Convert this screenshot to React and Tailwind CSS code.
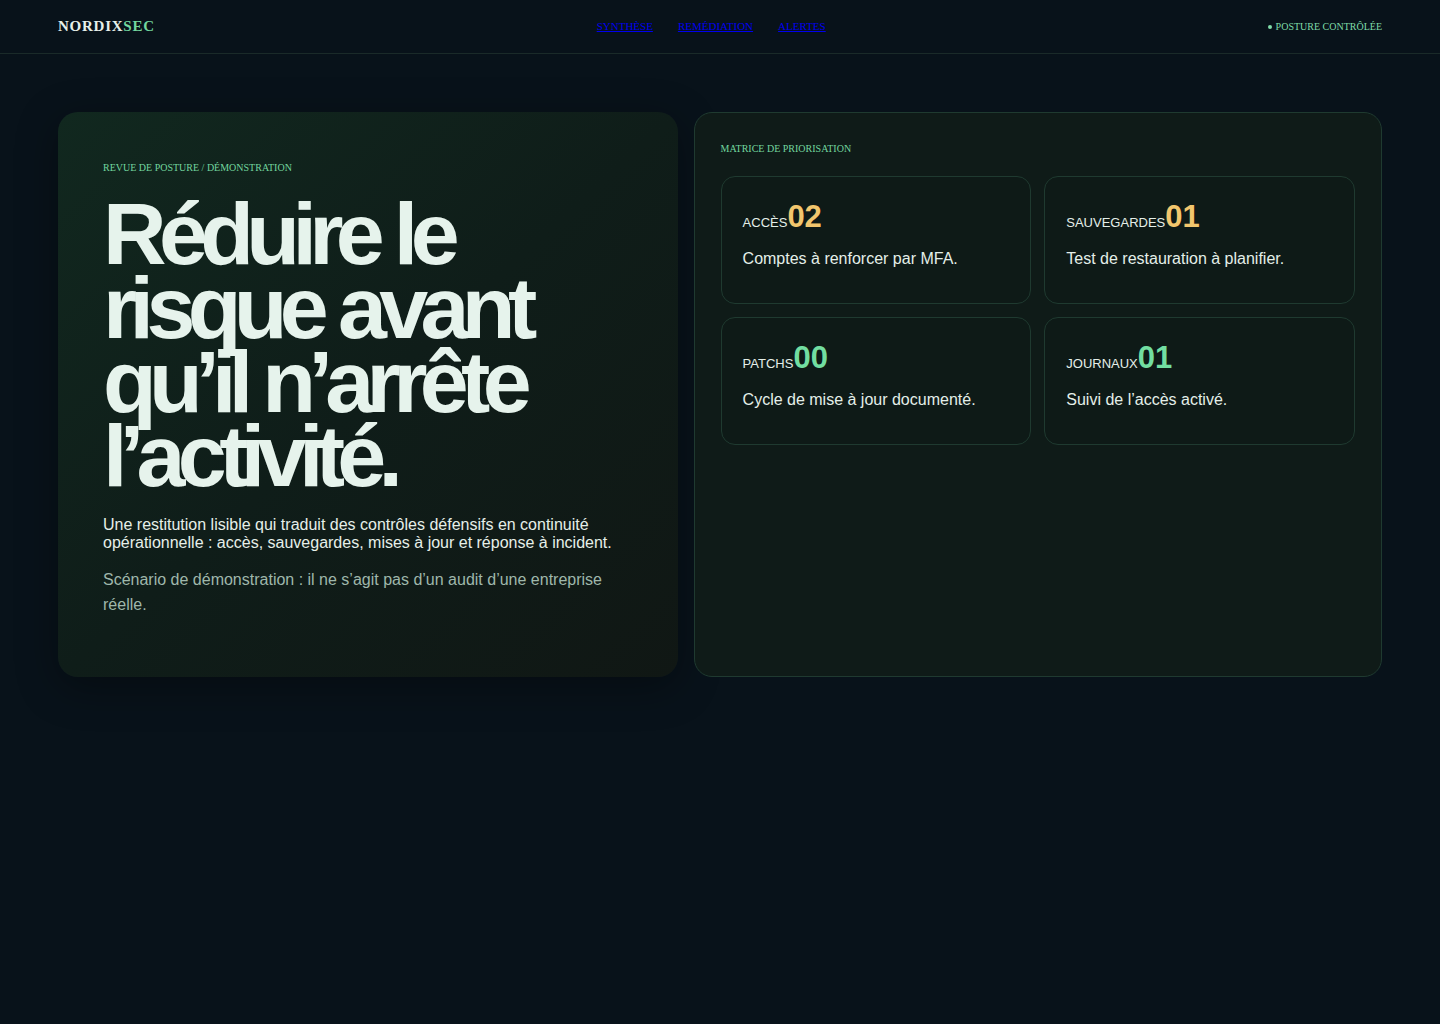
import React from 'react';

const serif = { fontFamily: '"Liberation Serif", "Times New Roman", serif' };
const sans = { fontFamily: '"Liberation Sans", Arial, sans-serif' };

const tiles = [
  { label: 'Accès', value: '02', tone: 'text-[#f2c66d]', text: 'Comptes à renforcer par MFA.' },
  { label: 'Sauvegardes', value: '01', tone: 'text-[#f2c66d]', text: 'Test de restauration à planifier.' },
  { label: 'Patchs', value: '00', tone: 'text-[#72dea1]', text: 'Cycle de mise à jour documenté.' },
  { label: 'Journaux', value: '01', tone: 'text-[#72dea1]', text: 'Suivi de l’accès activé.' },
];

function Header() {
  return (
    <header className="h-[54px] border-b border-[#1a2a29] flex items-center justify-between px-[58px]" style={serif}>
      <div className="text-[15px] font-bold tracking-[0.05em] text-[#e6f0ea]">
        NORDIX<span className="text-[#72d69e]">SEC</span>
      </div>
      <nav className="flex items-center gap-[25px] text-[11px] uppercase">
        <a href="#synthese" className="text-[#0000ee] underline">Synthèse</a>
        <a href="#remediation" className="text-[#0000ee] underline">Remédiation</a>
        <a href="#alertes" className="text-[#0000ee] underline">Alertes</a>
      </nav>
      <div className="flex items-center gap-[4px] text-[10px] uppercase text-[#7fdca8]">
        <span className="w-[4px] h-[4px] rounded-full bg-[#7fdca8]"></span>
        Posture contrôlée
      </div>
    </header>
  );
}

function Tile({ label, value, tone, text }) {
  return (
    <div className="rounded-[14px] border border-[#1f3a30] bg-[#0e1a17] px-[21px] pt-[24px] pb-5 min-h-[128px]" style={sans}>
      <div className="flex items-baseline">
        <span className="text-[13px] uppercase text-[#e4efe9]">{label}</span>
        <span className={`text-[31px] font-bold leading-none ${tone}`}>{value}</span>
      </div>
      <p className="mt-[14px] text-[16px] leading-6 text-[#e4efe9]">{text}</p>
    </div>
  );
}

export default function App() {
  return (
    <div className="min-h-[1024px] bg-[#08121a] text-[#e4efe9]">
      <Header />
      <main className="px-[58px] pt-[58px] grid grid-cols-[0.9fr_1fr] gap-4">
        <section className="min-h-[565px] rounded-[20px] bg-linear-to-br from-[#11281f] via-[#0f1d19] to-[#101714] shadow-[0_10px_40px_rgba(0,0,0,0.35)] px-[45px] pt-[48px] pb-[60px]">
          <p className="text-[10px] uppercase text-[#72d69e] leading-[15px]" style={serif}>
            Revue de posture / démonstration
          </p>
          <h1 className="mt-[22px] text-[88px] font-bold leading-[0.84] tracking-[-0.087em] text-[#e6f3ec]" style={sans}>
            Réduire le risque avant qu’il n’arrête l’activité.
          </h1>
          <p className="mt-[23px] text-[16px] leading-[18px] text-[#e6efe9]" style={sans}>
            Une restitution lisible qui traduit des contrôles défensifs en continuité opérationnelle : accès, sauvegardes, mises à jour et réponse à incident.
          </p>
          <p className="mt-[15px] text-[16px] leading-[25px] text-[#9fb7ab]" style={sans}>
            Scénario de démonstration : il ne s’agit pas d’un audit d’une entreprise réelle.
          </p>
        </section>
        <section className="min-h-[565px] rounded-[18px] border border-[#1f3a30] bg-[#0f1b18] px-[26px] pt-[28px] pb-[26px]">
          <p className="text-[10px] uppercase text-[#72d69e] leading-[15px]" style={serif}>
            Matrice de priorisation
          </p>
          <div className="mt-[20px] grid grid-cols-2 gap-[13px]">
            {tiles.map((t) => (
              <Tile key={t.label} {...t} />
            ))}
          </div>
        </section>
      </main>
    </div>
  );
}
